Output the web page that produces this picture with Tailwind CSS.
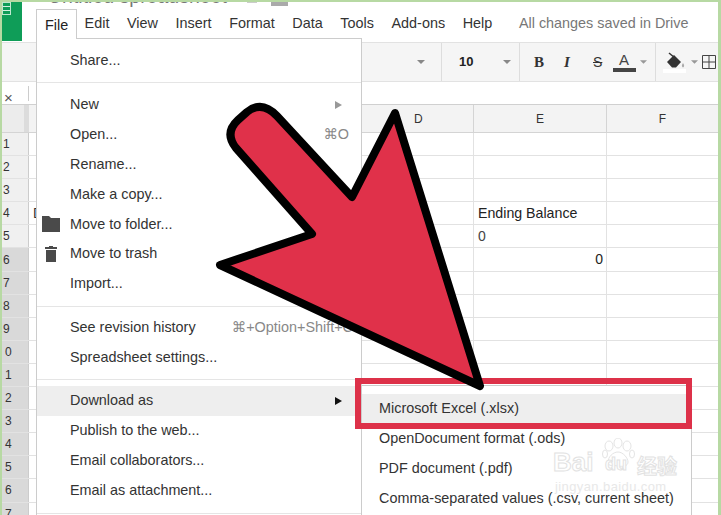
<!DOCTYPE html>
<html lang="en">
<head>
  <meta charset="UTF-8" />
  <meta name="viewport" content="width=device-width, initial-scale=1.0" />
  <title>Download as Excel</title>
  <script src="https://cdn.jsdelivr.net/npm/@tailwindcss/browser@4"></script>
</head>
<body class="bg-white">
<div class="relative w-[721px] h-[515px] overflow-hidden bg-white text-[#333] text-[14.400px] [font-family:'Liberation_Sans','DejaVu_Sans',sans-serif]">

  <!-- Title and menu bar -->
  <header class="flex h-[42px] pl-[2px] pt-[2px]">
    <div class="relative w-[20px] h-[39px] bg-[#0f9d58] shrink-0">
      <div class="absolute left-0 top-0 w-[9px] h-[13px] border border-[#bfe8cf] flex flex-col justify-evenly">
        <div class="h-px bg-[#d5f0df]"></div>
        <div class="h-px bg-[#d5f0df]"></div>
      </div>
    </div>
    <div class="flex-1 flex flex-col">
      <div class="flex items-center h-[7px] overflow-hidden pl-[26px]">
        <span class="text-[19.500px] leading-[22px] -mt-[20px] text-[#777] whitespace-nowrap">Untitled spreadsheet</span>
        <span class="ml-[20px] -mt-[8px] w-[10px] h-[2px] bg-[#ccc]"></span>
        <span class="ml-[14px] -mt-[4px] w-[17px] h-[5px] bg-[#aaa]"></span>
      </div>
      <nav class="flex items-center h-[29px] pl-[23px] gap-[17.600px] whitespace-nowrap">
        <span class="w-[22px]">File</span>
        <span>Edit</span>
        <span>View</span>
        <span>Insert</span>
        <span>Format</span>
        <span>Data</span>
        <span>Tools</span>
        <span>Add-ons</span>
        <span>Help</span>
        <span class="ml-[9px] text-[#777]">All changes saved in Drive</span>
      </nav>
    </div>
  </header>

  <!-- Toolbar -->
  <div class="flex items-center h-[40px] pl-[361px] bg-[#f5f5f5] border-y border-[#e2e2e2]">
    <div class="flex items-center justify-end w-[81px] h-full pr-[16px] border-r border-[#ddd]">
      <svg width="8" height="4" viewBox="0 0 8 4"><path d="M0 0h8L4 4z" fill="#888"/></svg>
    </div>
    <div class="flex items-center w-[78px] h-full pl-[17px] border-r border-[#ddd]">
      <span class="text-[13px] font-bold text-[#222]">10</span>
      <svg class="ml-[30px]" width="8" height="4" viewBox="0 0 8 4"><path d="M0 0h8L4 4z" fill="#888"/></svg>
    </div>
    <div class="flex items-center w-[136px] h-full border-r border-[#ddd]">
      <span class="ml-[14px] w-[30px] text-[15px] font-bold [font-family:'Liberation_Serif',serif] text-[#333]">B</span>
      <span class="w-[29px] text-[15px] font-bold italic [font-family:'Liberation_Serif',serif] text-[#333]">I</span>
      <span class="w-[18px] text-[14px] line-through text-[#333]">S</span>
      <div class="flex flex-col items-center w-[24px] ml-[1px] -mt-[2px]">
        <span class="text-[15px] leading-[17px] text-[#444]">A</span>
        <div class="w-[23px] h-[4px] bg-[#444]"></div>
      </div>
      <svg class="ml-[4px]" width="7" height="4" viewBox="0 0 8 4"><path d="M0 0h8L4 4z" fill="#999"/></svg>
    </div>
    <div class="flex items-center h-full pl-[7px]">
      <div class="flex flex-col items-center w-[23px]">
        <svg width="20" height="17" viewBox="0 0 20 17">
          <path d="M2 10 9 3l7 7-5 5.500H7z" fill="#333"/>
          <path d="M4 1l6 5" stroke="#333" stroke-width="1.500" fill="none"/>
          <path d="M18 11c1.500 2 1.500 4 0 4.500-1.500-.5-1.500-2.500 0-4.500z" fill="#aaa"/>
        </svg>
        <div class="w-[23px] h-[4px] bg-white"></div>
      </div>
      <svg class="ml-[5px]" width="7" height="4" viewBox="0 0 8 4"><path d="M0 0h8L4 4z" fill="#999"/></svg>
      <svg class="ml-[4px]" width="14" height="14" viewBox="0 0 14 14"><path d="M.5.5h13v13H.5zM7 .5v13M.5 7h13" stroke="#444" fill="none"/></svg>
    </div>
  </div>

  <!-- Formula bar -->
  <div class="flex items-center h-[23px] pl-[4px] bg-white border-b border-[#d0d0d0]">
    <span class="w-[24px] mt-[8px] text-[15px] leading-none text-[#555]">×</span>
    <div class="w-px h-[15px] bg-[#ccc]"></div>
  </div>

  <!-- Sheet -->
  <div class="pl-[2px] text-[12px]">
    <div class="flex h-[28px] bg-[#f3f3f3] border-b border-[#d4d4d4] text-center text-[#333]">
      <div class="w-[27px] bg-[#ececec] border-r-[5px] border-[#dcdcdc]"></div>
      <div class="w-[332px]"></div>
      <div class="w-[112px] flex items-center pl-[53px]">D</div>
      <div class="w-[133px] flex items-center justify-center border-l border-[#d4d4d4]">E</div>
      <div class="w-[112px] flex items-center justify-center border-l border-[#d4d4d4]">F</div>
    </div>
    <div class="flex h-[23.100px] border-b border-[#e2e2e2]"><div class="w-[27px] bg-[#f0f0f0] border-r border-[#ccc] flex items-center pl-[1px] text-[#333]">1</div><div class="w-[332px]"></div><div class="w-[112px]"></div><div class="w-[133px] border-l border-[#e2e2e2]"></div><div class="flex-1 border-l border-[#e2e2e2]"></div></div>
    <div class="flex h-[23.100px] border-b border-[#e2e2e2]"><div class="w-[27px] bg-[#f0f0f0] border-r border-[#ccc] flex items-center pl-[1px] text-[#333]">2</div><div class="w-[332px]"></div><div class="w-[112px]"></div><div class="w-[133px] border-l border-[#e2e2e2]"></div><div class="flex-1 border-l border-[#e2e2e2]"></div></div>
    <div class="flex h-[23.100px] border-b border-[#e2e2e2]"><div class="w-[27px] bg-[#f0f0f0] border-r border-[#ccc] flex items-center pl-[1px] text-[#333]">3</div><div class="w-[332px]"></div><div class="w-[112px]"></div><div class="w-[133px] border-l border-[#e2e2e2]"></div><div class="flex-1 border-l border-[#e2e2e2]"></div></div>
    <div class="flex h-[23.100px] border-b border-[#e2e2e2]"><div class="w-[27px] bg-[#f0f0f0] border-r border-[#ccc] flex items-center pl-[1px] text-[#333]">4</div><div class="w-[332px] flex items-center pl-[4px] text-[14px] text-[#333]">D</div><div class="w-[112px]"></div><div class="w-[133px] border-l border-[#e2e2e2] flex items-center pl-[4px] text-[14.200px] text-[#222] whitespace-nowrap">Ending Balance</div><div class="flex-1 border-l border-[#e2e2e2]"></div></div>
    <div class="flex h-[23.100px] border-b border-[#e2e2e2]"><div class="w-[27px] bg-[#f0f0f0] border-r border-[#ccc] flex items-center pl-[1px] text-[#333]">5</div><div class="w-[332px]"></div><div class="w-[112px]"></div><div class="w-[133px] border-l border-[#e2e2e2] flex items-center pl-[4px] text-[14px] text-[#444]">0</div><div class="flex-1 border-l border-[#e2e2e2]"></div></div>
    <div class="flex h-[23.100px] border-b border-[#e2e2e2]"><div class="w-[27px] bg-[#d9d9d9] border-r border-[#ccc] flex items-center pl-[1px] text-[#333]">6</div><div class="w-[332px]"></div><div class="w-[112px]"></div><div class="w-[133px] border-l border-[#e2e2e2] flex items-center justify-end pr-[3px] text-[14px] text-[#222]">0</div><div class="flex-1 border-l border-[#e2e2e2]"></div></div>
    <div class="flex h-[23.100px] border-b border-[#e2e2e2]"><div class="w-[27px] bg-[#d9d9d9] border-r border-[#ccc] flex items-center pl-[1px] text-[#333]">7</div><div class="w-[332px]"></div><div class="w-[112px]"></div><div class="w-[133px] border-l border-[#e2e2e2]"></div><div class="flex-1 border-l border-[#e2e2e2]"></div></div>
    <div class="flex h-[23.100px] border-b border-[#e2e2e2]"><div class="w-[27px] bg-[#d9d9d9] border-r border-[#ccc] flex items-center pl-[1px] text-[#333]">8</div><div class="w-[332px]"></div><div class="w-[112px]"></div><div class="w-[133px] border-l border-[#e2e2e2]"></div><div class="flex-1 border-l border-[#e2e2e2]"></div></div>
    <div class="flex h-[23.100px] border-b border-[#e2e2e2]"><div class="w-[27px] bg-[#d9d9d9] border-r border-[#ccc] flex items-center pl-[1px] text-[#333]">9</div><div class="w-[332px]"></div><div class="w-[112px]"></div><div class="w-[133px] border-l border-[#e2e2e2]"></div><div class="flex-1 border-l border-[#e2e2e2]"></div></div>
    <div class="flex h-[23.100px] border-b border-[#e2e2e2]"><div class="w-[27px] bg-[#d9d9d9] border-r border-[#ccc] flex items-center pl-[3px] text-[#333]">0</div><div class="w-[332px]"></div><div class="w-[112px]"></div><div class="w-[133px] border-l border-[#e2e2e2]"></div><div class="flex-1 border-l border-[#e2e2e2]"></div></div>
    <div class="flex h-[23.100px] border-b border-[#e2e2e2]"><div class="w-[27px] bg-[#d9d9d9] border-r border-[#ccc] flex items-center pl-[3px] text-[#333]">1</div><div class="w-[332px]"></div><div class="w-[112px]"></div><div class="w-[133px] border-l border-[#e2e2e2]"></div><div class="flex-1 border-l border-[#e2e2e2]"></div></div>
    <div class="flex h-[23.100px] border-b border-[#e2e2e2]"><div class="w-[27px] bg-[#d9d9d9] border-r border-[#ccc] flex items-center pl-[3px] text-[#333]">2</div><div class="w-[332px]"></div><div class="w-[112px]"></div><div class="w-[133px] border-l border-[#e2e2e2]"></div><div class="flex-1 border-l border-[#e2e2e2]"></div></div>
    <div class="flex h-[23.100px] border-b border-[#e2e2e2]"><div class="w-[27px] bg-[#d9d9d9] border-r border-[#ccc] flex items-center pl-[3px] text-[#333]">3</div><div class="w-[332px]"></div><div class="w-[112px]"></div><div class="w-[133px] border-l border-[#e2e2e2]"></div><div class="flex-1 border-l border-[#e2e2e2]"></div></div>
    <div class="flex h-[23.100px] border-b border-[#e2e2e2]"><div class="w-[27px] bg-[#d9d9d9] border-r border-[#ccc] flex items-center pl-[3px] text-[#333]">4</div><div class="w-[332px]"></div><div class="w-[112px]"></div><div class="w-[133px] border-l border-[#e2e2e2]"></div><div class="flex-1 border-l border-[#e2e2e2]"></div></div>
    <div class="flex h-[23.100px] border-b border-[#e2e2e2]"><div class="w-[27px] bg-[#d9d9d9] border-r border-[#ccc] flex items-center pl-[3px] text-[#333]">5</div><div class="w-[332px]"></div><div class="w-[112px]"></div><div class="w-[133px] border-l border-[#e2e2e2]"></div><div class="flex-1 border-l border-[#e2e2e2]"></div></div>
    <div class="flex h-[23.100px] border-b border-[#e2e2e2]"><div class="w-[27px] bg-[#d9d9d9] border-r border-[#ccc] flex items-center pl-[3px] text-[#333]">6</div><div class="w-[332px]"></div><div class="w-[112px]"></div><div class="w-[133px] border-l border-[#e2e2e2]"></div><div class="flex-1 border-l border-[#e2e2e2]"></div></div>
    <div class="flex h-[23.100px] border-b border-[#e2e2e2]"><div class="w-[27px] bg-[#d9d9d9] border-r border-[#ccc] flex items-center pl-[3px] text-[#333]">7</div><div class="w-[332px]"></div><div class="w-[112px]"></div><div class="w-[133px] border-l border-[#e2e2e2]"></div><div class="flex-1 border-l border-[#e2e2e2]"></div></div>
  </div>

  <!-- File tab -->
  <div class="absolute left-[36px] top-[9px] w-[41px] h-[30px] z-20 bg-white border border-b-0 border-[#ccc] flex items-center pl-[8px] pt-[2px] text-[#222]">File</div>

  <!-- File menu -->
  <div class="absolute left-[36px] top-[38px] w-[326px] h-[490px] z-10 bg-white border border-[#ccc] pt-[7px] text-[#333] whitespace-nowrap">
    <div class="flex items-center h-[29.900px] pl-[33px]">Share...</div>
    <div class="flex items-center h-[14px]"><div class="w-full h-px bg-[#e5e5e5]"></div></div>
    <div class="flex items-center justify-between h-[29.900px] pl-[33px] pr-[19px]">New<svg width="7" height="8" viewBox="0 0 7 8"><path d="M0 0l7 4-7 4z" fill="#999"/></svg></div>
    <div class="flex items-center justify-between h-[29.900px] pl-[33px] pr-[12px]">Open...<span class="text-[#888]">⌘O</span></div>
    <div class="flex items-center h-[29.900px] pl-[33px]">Rename...</div>
    <div class="flex items-center h-[29.900px] pl-[33px]">Make a copy...</div>
    <div class="flex items-center h-[29.900px] pl-[5px]">
      <svg class="mr-[10px]" width="18" height="16" viewBox="0 0 18 16"><path d="M0 0h7l2 2h9v14H0z" fill="#4a4a4a"/></svg>Move to folder...
    </div>
    <div class="flex items-center h-[29.900px] pl-[8px]">
      <svg class="mr-[13px]" width="12" height="16" viewBox="0 0 12 16"><path d="M4 0h4v1h4v2H0V1h4zM1 4h10v12H1z" fill="#4a4a4a"/></svg>Move to trash
    </div>
    <div class="flex items-center h-[29.900px] pl-[33px]">Import...</div>
    <div class="flex items-center h-[14px]"><div class="w-full h-px bg-[#e5e5e5]"></div></div>
    <div class="flex items-center justify-between h-[29.900px] pl-[33px] pr-[8px]">See revision history<span class="text-[#888]">⌘+Option+Shift+C</span></div>
    <div class="flex items-center h-[29.900px] pl-[33px]">Spreadsheet settings...</div>
    <div class="flex items-center h-[13px]"><div class="w-full h-px bg-[#e5e5e5]"></div></div>
    <div class="flex items-center justify-between h-[29.900px] pl-[33px] pr-[19px] bg-[#eee]">Download as<svg width="7" height="8" viewBox="0 0 7 8"><path d="M0 0l7 4-7 4z" fill="#111"/></svg></div>
    <div class="flex items-center h-[29.900px] pl-[33px]">Publish to the web...</div>
    <div class="flex items-center h-[29.900px] pl-[33px]">Email collaborators...</div>
    <div class="flex items-center h-[29.900px] pl-[33px]">Email as attachment...</div>
    <div class="flex items-center h-[10px] mt-[3px]"><div class="w-full h-px bg-[#e5e5e5]"></div></div>
  </div>

  <!-- Download as submenu -->
  <div class="absolute left-[361px] top-[385px] w-[331px] h-[140px] z-10 bg-white border border-[#ccc] pt-[8px] text-[#333] whitespace-nowrap">
    <div class="flex items-center h-[30px] pl-[17px] bg-[#eee]">Microsoft Excel (.xlsx)</div>
    <div class="flex items-center h-[30px] pl-[17px]">OpenDocument format (.ods)</div>
    <div class="flex items-center h-[30px] pl-[17px]">PDF document (.pdf)</div>
    <div class="flex items-center h-[30px] pl-[17px]">Comma-separated values (.csv, current sheet)</div>
  </div>

  <!-- Watermark -->
  <div class="absolute left-[553px] top-[436px] z-20 w-[130px] h-[60px] text-white [font-family:'Liberation_Sans','Noto_Sans_CJK_SC',sans-serif]">
    <span class="absolute left-0 top-[12px] text-[26px] leading-[28px] font-bold [-webkit-text-stroke:1px_#e2e2e2]">Bai</span>
    <svg class="absolute left-[48px] top-[2px]" width="34" height="32" viewBox="0 0 34 32" fill="#fff" stroke="#e4e4e4"><ellipse cx="8" cy="8" rx="4" ry="5"/><ellipse cx="17" cy="5" rx="4" ry="5"/><ellipse cx="26" cy="8" rx="4" ry="5"/><ellipse cx="31" cy="16" rx="2.500" ry="4"/><ellipse cx="4" cy="16" rx="2.500" ry="4"/><path d="M17 14c5 0 10 6 10 10s-5 5-10 4-10 1-10-4 5-10 10-10z"/></svg>
    <span class="absolute left-[52px] top-[18px] text-[18px] leading-[20px] font-bold [-webkit-text-stroke:1px_#e2e2e2]">du</span>
    <span class="absolute left-[84px] top-[19px] text-[20px] leading-[24px] font-bold [-webkit-text-stroke:1px_#e2e2e2]">经验</span>
    <span class="absolute left-[2px] top-[44px] text-[13px] leading-[14px] text-[#e8e8e8] whitespace-nowrap tracking-[0.4px]">jingyan.baidu.com</span>
  </div>

  <!-- Highlight box -->
  <div class="absolute left-[355px] top-[378px] w-[337px] h-[51px] z-20 border-[6px] border-[#dd3149]"></div>

  <!-- Big arrow -->
  <svg class="absolute left-0 top-0 z-30" width="721" height="515" viewBox="0 0 721 515">
    <path d="M352 197 277 116Q262 100 247 112L238 120Q224 133 236 148L312 234 220 265 480 386 395 113Z" fill="#e0314a" stroke="#000" stroke-width="8" stroke-linejoin="round"/>
  </svg>

  <!-- Green frame -->
  <div class="absolute inset-0 z-40 border-t-2 border-l-2 border-r-[3px] border-b-0 border-[#b7d9a3] pointer-events-none"></div>
</div>
</body>
</html>
